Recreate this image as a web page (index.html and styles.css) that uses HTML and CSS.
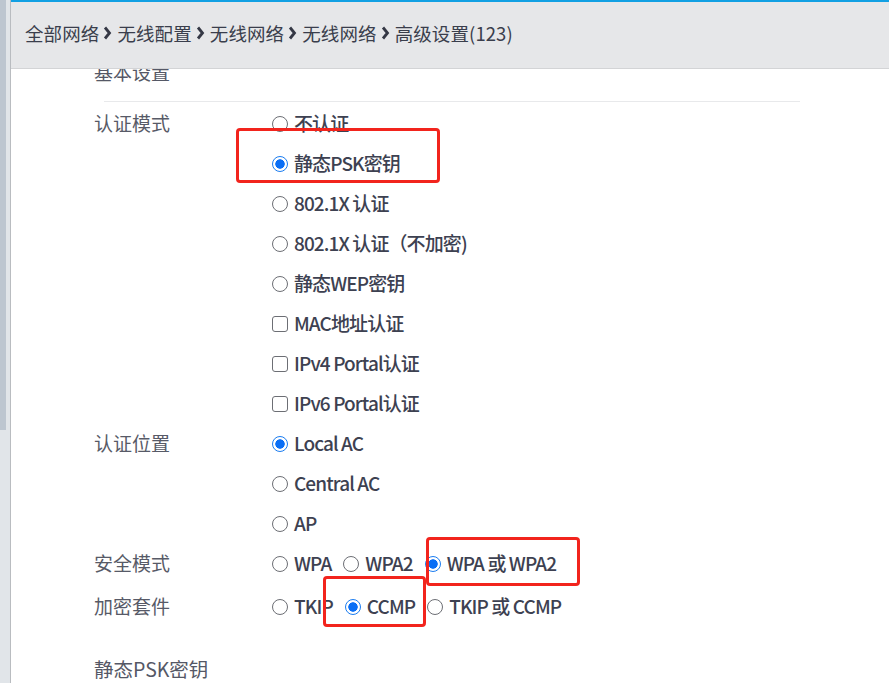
FILE: index.html
```html
<!DOCTYPE html>
<html lang="zh-CN">
<head>
<meta charset="utf-8">
<title>高级设置</title>
<link rel="stylesheet" href="styles.css">
</head>
<body>
<div class="app">
  <div class="sidebar"><div class="thumb"></div></div>
  <div class="main">
    <header class="header">
      <nav class="crumbs">
        <span>全部网络</span>
        <svg class="chev" viewBox="0 0 8 14"><polyline points="1.5,1.5 6,7 1.5,12.5"/></svg>
        <span>无线配置</span>
        <svg class="chev" viewBox="0 0 8 14"><polyline points="1.5,1.5 6,7 1.5,12.5"/></svg>
        <span>无线网络</span>
        <svg class="chev" viewBox="0 0 8 14"><polyline points="1.5,1.5 6,7 1.5,12.5"/></svg>
        <span>无线网络</span>
        <svg class="chev" viewBox="0 0 8 14"><polyline points="1.5,1.5 6,7 1.5,12.5"/></svg>
        <span>高级设置(123)</span>
      </nav>
    </header>
    <div class="content">
      <div class="inner">
        <h2 class="section-title">基本设置</h2>
        <div class="divider"></div>
        <div class="form">
          <div class="row">
            <div class="label">认证模式</div>
            <div class="options column">
              <div class="opt"><span class="ctl radio"></span>不认证</div>
              <div class="opt"><span class="ctl radio on"></span>静态PSK密钥</div>
              <div class="opt"><span class="ctl radio"></span>802.1X 认证</div>
              <div class="opt"><span class="ctl radio"></span>802.1X 认证（不加密)</div>
              <div class="opt"><span class="ctl radio"></span>静态WEP密钥</div>
              <div class="opt"><span class="ctl check"></span>MAC地址认证</div>
              <div class="opt"><span class="ctl check"></span>IPv4 Portal认证</div>
              <div class="opt"><span class="ctl check"></span>IPv6 Portal认证</div>
            </div>
          </div>
          <div class="row">
            <div class="label">认证位置</div>
            <div class="options column">
              <div class="opt"><span class="ctl radio on"></span>Local AC</div>
              <div class="opt"><span class="ctl radio"></span>Central AC</div>
              <div class="opt"><span class="ctl radio"></span>AP</div>
            </div>
          </div>
          <div class="row">
            <div class="label">安全模式</div>
            <div class="options inline">
              <div class="opt"><span class="ctl radio"></span>WPA</div>
              <div class="opt"><span class="ctl radio"></span>WPA2</div>
              <div class="opt"><span class="ctl radio on"></span>WPA 或 WPA2</div>
            </div>
          </div>
          <div class="row row-enc">
            <div class="label">加密套件</div>
            <div class="options inline">
              <div class="opt"><span class="ctl radio"></span>TKIP</div>
              <div class="opt"><span class="ctl radio on"></span>CCMP</div>
              <div class="opt"><span class="ctl radio"></span>TKIP 或 CCMP</div>
            </div>
          </div>
        </div>
        <h2 class="section-title second">静态PSK密钥</h2>
      </div>
    </div>
  </div>
</div>
<div class="mark mark-psk"></div>
<div class="mark mark-wpa"></div>
<div class="mark mark-ccmp"></div>
</body>
</html>
```
FILE: styles.css
```css
* { box-sizing: border-box; }
html, body { margin: 0; padding: 0; }
body {
  width: 889px;
  height: 683px;
  overflow: hidden;
  background: #ffffff;
  font-family: "Noto Sans CJK SC", "Noto Sans", sans-serif;
  color: #3e4252;
}
.app {
  display: flex;
  height: 683px;
}
.sidebar {
  width: 11px;
  flex: none;
  background: #e1e5e9;
  border-right: 1px solid #b9bcc0;
  padding-right: 4px;
}
.thumb {
  width: 6px;
  height: 430px;
  background: #bdc6d0;
}
.main {
  flex: 1;
  display: flex;
  flex-direction: column;
  min-width: 0;
}
.header {
  height: 69px;
  flex: none;
  background: #e6e7e9;
  border-top: 2px solid #12a0e3;
  border-bottom: 1px solid #d3d4d6;
  display: flex;
  align-items: center;
  padding-left: 14px;
  padding-bottom: 4px;
}
.crumbs {
  display: flex;
  align-items: center;
  font-size: 18.5px;
  color: #3a3e4c;
  letter-spacing: 0.1px;
}
.chev {
  width: 9px;
  height: 14px;
  margin: 0 5px 0 4px;
  fill: none;
  stroke: #353845;
  stroke-width: 2.8;
}
.content {
  flex: 1;
  overflow: hidden;
}
.inner {
  margin-top: -9px;
  padding-left: 83px;
}
.section-title {
  margin: 0;
  font-weight: normal;
  font-size: 19px;
  line-height: 24px;
  color: #555866;
  padding-bottom: 17px;
}
.divider {
  margin-left: 10px;
  width: 696px;
  height: 1px;
  background: #e8e9eb;
}
.form {
  padding-top: 0;
}
.row {
  display: flex;
}
.row-enc {
  margin-top: 3px;
}
.label {
  width: 178px;
  flex: none;
  height: 40px;
  line-height: 42px;
  font-size: 19px;
  color: #575a67;
}
.options.column {
  display: flex;
  flex-direction: column;
}
.options.inline {
  display: flex;
}
.opt {
  height: 40px;
  display: flex;
  align-items: center;
  font-size: 19px;
  font-weight: 500;
  letter-spacing: -0.9px;
  color: #3d4151;
  white-space: nowrap;
}
.options.inline .opt {
  margin-right: 12px;
}
.options.inline .opt:last-child { margin-right: 0; }
.ctl {
  display: block;
  flex: none;
  width: 16px;
  height: 16px;
  margin: 3px 6px 0 0;
  border: 1px solid #6c6e74;
  background: #fff;
}
.ctl.radio {
  border-radius: 50%;
}
.ctl.check {
  border-radius: 3px;
}
.ctl.radio.on {
  border: 1.5px solid #1a7cf0;
  background: radial-gradient(circle, #0a6ff5 0 4.4px, #ffffff 5px);
}
.section-title.second {
  margin-top: 32px;
  padding-bottom: 0;
  font-size: 19.5px;
}
.mark {
  position: absolute;
  border: 3px solid #f2241d;
  border-radius: 4px;
}
.mark-psk { left: 236px; top: 128px; width: 204px; height: 55px; }
.mark-wpa { left: 426px; top: 537px; width: 154px; height: 49px; }
.mark-ccmp { left: 323px; top: 576px; width: 103px; height: 51px; }
```
